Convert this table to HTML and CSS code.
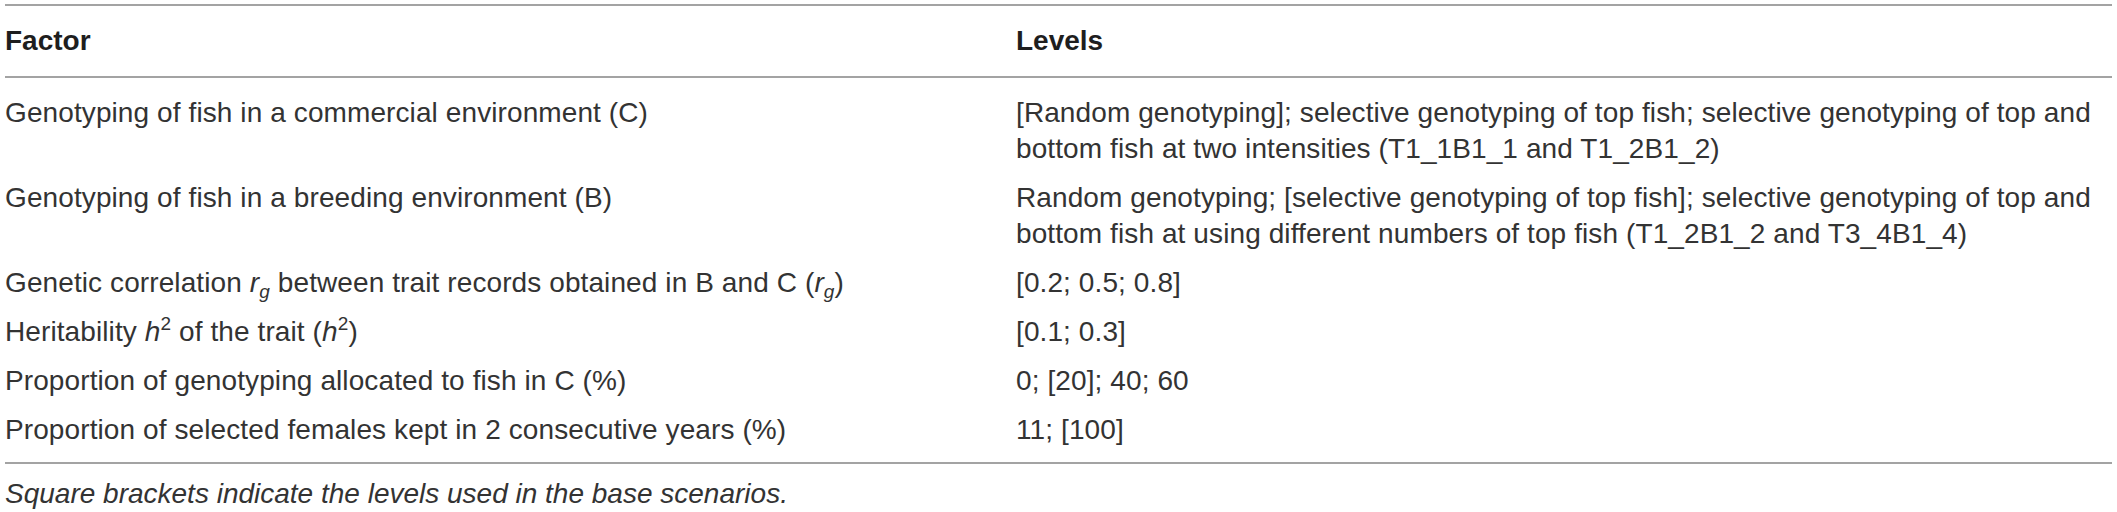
FILE: index.html
```html
<!DOCTYPE html>
<html lang="en">
<head>
<meta charset="utf-8">
<title>Factors and levels</title>
<link rel="stylesheet" href="styles.css">
</head>
<body>
<div class="wrap">
  <table class="levels-table">
    <thead>
      <tr>
        <th class="col-factor">Factor</th>
        <th class="col-levels">Levels</th>
      </tr>
    </thead>
    <tbody>
      <tr>
        <td>Genotyping of fish in a commercial environment (C)</td>
        <td>[Random genotyping]; selective genotyping of top fish; selective genotyping of top and<br>bottom fish at two intensities (T1_1B1_1 and T1_2B1_2)</td>
      </tr>
      <tr>
        <td>Genotyping of fish in a breeding environment (B)</td>
        <td>Random genotyping; [selective genotyping of top fish]; selective genotyping of top and<br>bottom fish at using different numbers of top fish (T1_2B1_2 and T3_4B1_4)</td>
      </tr>
      <tr>
        <td>Genetic correlation <i>r<sub>g</sub></i> between trait records obtained in B and C (<i>r<sub>g</sub></i>)</td>
        <td>[0.2; 0.5; 0.8]</td>
      </tr>
      <tr>
        <td>Heritability <i>h</i><sup>2</sup> of the trait (<i>h</i><sup>2</sup>)</td>
        <td>[0.1; 0.3]</td>
      </tr>
      <tr>
        <td>Proportion of genotyping allocated to fish in C (%)</td>
        <td>0; [20]; 40; 60</td>
      </tr>
      <tr>
        <td>Proportion of selected females kept in 2 consecutive years (%)</td>
        <td>11; [100]</td>
      </tr>
    </tbody>
  </table>
  <p class="caption">Square brackets indicate the levels used in the base scenarios.</p>
</div>
</body>
</html>
```

FILE: styles.css
```css
html, body {
  margin: 0;
  padding: 0;
  background: #ffffff;
}

body {
  font-family: "Liberation Sans", Arial, Helvetica, sans-serif;
  font-size: 28px;
  line-height: 36px;
  color: #333333;
}

.wrap {
  padding: 4px 5px 0 5px;
}

.levels-table {
  width: 2107px;
  border-collapse: collapse;
  border-top: 2px solid #a3a3a3;
  border-bottom: 2px solid #a3a3a3;
}

.levels-table th {
  text-align: left;
  font-weight: bold;
  color: #1e1e1e;
  padding: 17px 0 17px 0;
  border-bottom: 2px solid #a3a3a3;
  vertical-align: top;
}

.col-factor {
  width: 1011px;
}

.levels-table td {
  padding: 6px 0 7px 0;
  vertical-align: top;
  white-space: nowrap;
  letter-spacing: 0.1px;
}

.levels-table tbody tr:first-child td {
  padding-top: 17px;
}

.levels-table tbody tr:last-child td {
  padding-bottom: 14px;
}

.levels-table sub,
.levels-table sup {
  font-size: 19px;
  line-height: 0;
  position: relative;
  vertical-align: baseline;
}

.levels-table sub {
  top: 6px;
}

.levels-table sup {
  top: -11px;
  font-style: normal;
}

.caption {
  margin: 12px 0 0 0;
  font-style: italic;
}
```
